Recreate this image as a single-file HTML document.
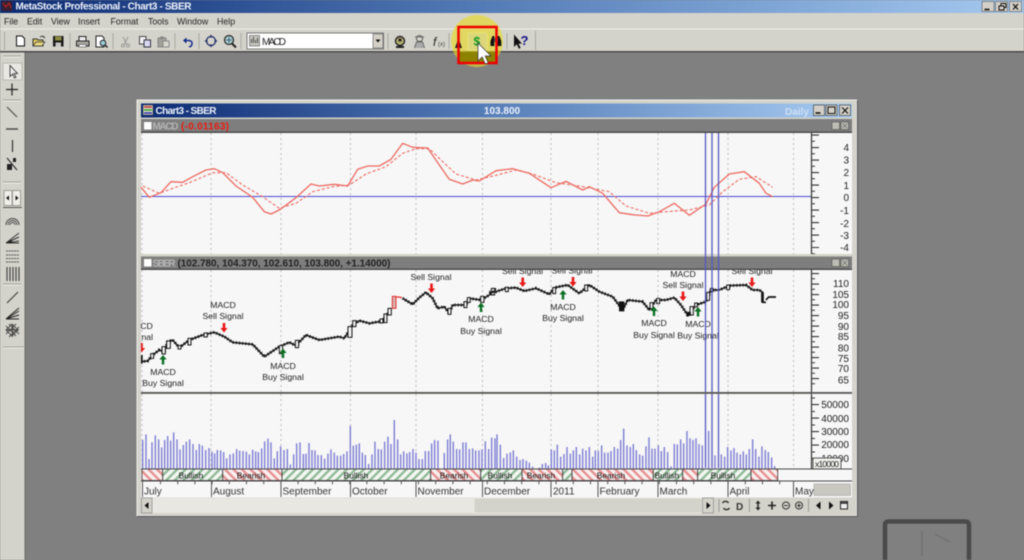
<!DOCTYPE html>
<html><head><meta charset="utf-8"><title>MetaStock Professional - Chart3 - SBER</title>
<style>
html,body{margin:0;padding:0;background:#808080;overflow:hidden;width:1024px;height:560px}
svg{display:block;filter:blur(.6px)}
text{font-family:"Liberation Sans",sans-serif}
.m{font-size:8.8px;fill:#222}
.a{font-size:10px;fill:#222;text-anchor:end}
.l{font-size:8.7px;fill:#222;text-anchor:middle}
.mo{font-size:10px;fill:#333}
.h{font-size:8.4px;fill:#111;text-anchor:middle}
.d{stroke:#bbb;stroke-width:1;stroke-dasharray:2 3;fill:none}
</style></head><body>
<svg width="1024" height="560" viewBox="0 0 1024 560" xmlns="http://www.w3.org/2000/svg">
<defs>
<linearGradient id="tg"><stop offset="0" stop-color="#0c2a72"/><stop offset=".45" stop-color="#5078b4"/><stop offset="1" stop-color="#a6caf0"/></linearGradient>
<pattern id="gr" width="6" height="6" patternUnits="userSpaceOnUse" patternTransform="rotate(45)"><rect width="6" height="6" fill="#f4f6f2"/><rect width="2.4" height="6" fill="#8fbb98"/></pattern>
<pattern id="rd" width="6" height="6" patternUnits="userSpaceOnUse" patternTransform="rotate(-45)"><rect width="6" height="6" fill="#f8f0f0"/><rect width="2.4" height="6" fill="#e89090"/></pattern>
<clipPath id="cp"><rect x="141" y="270" width="670" height="122"/></clipPath>
<path id="dn" d="M-1.3 -5V0H-3.6L0 4.5 3.6 0H1.3V-5Z" fill="#e81818"/>
<path id="up" d="M-1.2 5V0H-3.6L0 -4.5 3.6 0H1.2V5Z" fill="#0b6e22"/>
</defs>

<!-- desktop -->
<rect width="1024" height="560" fill="#808080"/>
<!-- ghost watermark -->
<g fill="none">
<rect x="885" y="521.500" width="84" height="60" rx="3" stroke="#4a4a4a" stroke-width="4.500"/>
<path d="M922 530V556M935 534l9 5 6 3" stroke="#727272" stroke-width="1.500"/>
</g>

<!-- title bar -->
<rect width="1024" height="13" fill="url(#tg)"/>
<rect x="2" y="1" width="10" height="10" fill="#3a2030"/><path d="M3 3l3 4 3-4 2 5" stroke="#d02020" fill="none"/>
<text x="15.5" y="9.5" font-size="10" font-weight="bold" fill="#eef2fa" textLength="176">MetaStock Professional - Chart3 - SBER</text>
<g fill="#d4d0c8" stroke="#555" stroke-width=".6">
<rect x="982" y="1.5" width="12" height="10"/><rect x="995.5" y="1.5" width="12" height="10"/><rect x="1009.5" y="1.5" width="12" height="10"/>
</g>
<path d="M984.5 9.5h5" stroke="#111" stroke-width="1.6"/>
<path d="M999 6h5v4h-5zM1001 6V3.5h5v4h-2" fill="none" stroke="#111"/>
<path d="M1013 4l5 5.500M1018 4l-5 5.500" stroke="#111" stroke-width="1.3"/>

<!-- menu and toolbar bg -->
<rect y="13" width="1024" height="39" fill="#d4d3cb"/>
<rect y="28.500" width="1024" height="1" fill="#f0efe9"/>
<rect y="51" width="1024" height="1.500" fill="#4a4a4a"/>
<text class="m" x="4" y="24.500">File</text>
<text class="m" x="27" y="24.500">Edit</text>
<text class="m" x="51" y="24.500">View</text>
<text class="m" x="78" y="24.500">Insert</text>
<text class="m" x="110.500" y="24.500">Format</text>
<text class="m" x="148" y="24.500">Tools</text>
<text class="m" x="177" y="24.500">Window</text>
<text class="m" x="217" y="24.500">Help</text>

<!-- toolbar separators -->
<path d="M4.500 32V50M70 33V49M113 33V49M175 33V49M199 33V49M241 33V49M388 33V49M449 33V49M507 33V49M535.500 31V50" stroke="#a9a8a0"/>

<!-- new -->
<path d="M16.500 36h5.500l2.500 2.500V46h-8Z" fill="#fff" stroke="#111"/>
<!-- open -->
<path d="M33 46V39h4l1 1h5v6Z" fill="#dcc860" stroke="#333"/><path d="M33 46l3-4h9l-3 4Z" fill="#e8d880" stroke="#333" stroke-width=".7"/><path d="M40 37q3-2 5 1" stroke="#333" fill="none"/>
<!-- save -->
<rect x="53" y="36" width="10.500" height="10.500" fill="#1a1a1a"/><rect x="55" y="36.500" width="6.500" height="4" fill="#8a8a40"/><rect x="55.500" y="42.500" width="5.500" height="4" fill="#c8c8c0"/>
<!-- print -->
<rect x="76.500" y="41" width="12.500" height="5" fill="#a8a8a0" stroke="#222"/><rect x="79" y="36.500" width="7" height="4.500" fill="#eee" stroke="#222"/><rect x="79" y="44.500" width="7" height="2.500" fill="#fff" stroke="#444" stroke-width=".6"/>
<!-- preview -->
<path d="M96 36h6l2 2v9h-8Z" fill="#fff" stroke="#222"/><circle cx="103" cy="43" r="2.800" fill="#9ad0d8" stroke="#222"/><path d="M105 45l2.500 2.500" stroke="#222" stroke-width="1.500"/>
<!-- cut -->
<path d="M123 37l3.500 7M128 37l-3.500 7" stroke="#999"/><circle cx="123" cy="45.500" r="1.500" fill="none" stroke="#999"/><circle cx="128" cy="45.500" r="1.500" fill="none" stroke="#999"/>
<!-- copy -->
<rect x="139.500" y="36.500" width="6.500" height="7.500" fill="#f4f4f4" stroke="#444"/><rect x="144" y="40" width="6.500" height="7" fill="#d8d8f0" stroke="#334"/>
<!-- paste -->
<rect x="158" y="38" width="8" height="9" fill="#a0a098" stroke="#888"/><rect x="163" y="41" width="6" height="6" fill="#d8d8d0" stroke="#888"/><rect x="160" y="36.500" width="4" height="2.500" fill="#888"/>
<!-- undo -->
<path d="M184 40.500h5q3.500 .5 3 3.500t-3 2.500" fill="none" stroke="#142a8a" stroke-width="1.500"/><path d="M186.500 37.500v6l-3.500-3Z" fill="#142a8a"/>
<!-- move -->
<circle cx="211" cy="41" r="4.500" fill="none" stroke="#24306a" stroke-width="1.300"/><path d="M211 34.500l2 3h-4ZM211 47.500l2-3h-4ZM204.500 41l3-2v4ZM217.500 41l-3-2v4Z" fill="#24306a"/>
<!-- zoom -->
<circle cx="229" cy="40" r="4.500" fill="#a8d4d0" stroke="#222" stroke-width="1.200"/><path d="M232 43.500l4 4" stroke="#222" stroke-width="2"/><path d="M226 40h6M229 37v6" stroke="#336" stroke-width=".7"/>
<!-- combo -->
<rect x="247" y="33" width="136.500" height="16" fill="#fff" stroke="#777"/>
<rect x="249.500" y="35.500" width="10" height="10.500" fill="#c4c4bc" stroke="#555" stroke-width=".6"/>
<path d="M251.500 43v-4M253.500 43v-6M255.500 43v-3M257.500 43v-5" stroke="#333" stroke-width=".8"/>
<text x="262" y="44.800" font-size="10" fill="#222" textLength="24">MACD</text>
<rect x="373" y="34" width="10" height="14" fill="#d4d0c8" stroke="#555" stroke-width=".6"/><path d="M375.500 39.500h5l-2.500 3Z" fill="#111"/>
<!-- expert icons -->
<circle cx="400" cy="41" r="4.500" fill="#b4b070" stroke="#222" stroke-width="1.400"/><path d="M396 46h8v2h-8Z" fill="#222"/><circle cx="400" cy="40" r="1.600" fill="#222"/>
<circle cx="419.500" cy="38.500" r="3" fill="#d8d8d0" stroke="#555"/><path d="M415 37h9M414.500 48l2-6h6l2 6" fill="#aaa" stroke="#666"/>
<text x="433" y="46" font-size="12" font-style="italic" font-family="Liberation Serif" fill="#222">f</text><text x="438" y="46" font-size="6" fill="#444">(x)</text>

<!-- yellow highlight -->
<circle cx="477" cy="41" r="26" fill="#e6da20" fill-opacity=".62"/>
<rect x="468" y="33" width="19" height="17" fill="#dcd67a" stroke="#eee77e" stroke-width=".7"/>
<rect x="459" y="52" width="37" height="10.500" fill="#8d8100"/>
<path d="M455 48l3.500-10 3.500 10Z" fill="#1a1a1a"/>
<text x="473.500" y="45.500" font-size="12" font-weight="bold" fill="#119a22">$</text>
<!-- binoculars -->
<path d="M490.500 46v-5l2-5h1.800v10ZM497.500 46V36h1.800l2 5v5Z" fill="#111"/><rect x="494" y="38" width="4" height="4" fill="#555"/>
<!-- help -->
<path d="M514 34.500V47l2.800-2.800 2 4.500 1.800-.8-2-4.300H522Z" fill="#111"/>
<text x="520.500" y="45" font-size="13" font-weight="bold" fill="#14148a">?</text>
<rect x="458.500" y="27" width="38" height="36" fill="none" stroke="#f00000" stroke-width="2.500"/>
<path d="M478 43V61l4.200-4 3 7 3-1.300-3-6.700H491Z" fill="#fff" stroke="#333" stroke-width=".7"/>

<!-- left toolbar -->
<rect x="0" y="52.500" width="24.500" height="508" fill="#d4d3cb"/>
<rect x="24.500" y="52.500" width="1" height="508" fill="#6a6a6a"/>
<path d="M3 56h18M3 100h18M3 182h18M3 284h18M3 347h21" stroke="#a0a098"/><path d="M3 57h18M3 101h18M3 183h18M3 285h18M3 348h21" stroke="#f0efe9"/>
<rect x="3" y="63" width="19" height="17" fill="#e8e7e2" stroke="#b8b8b0"/>
<path d="M10 65.500v11l2.500-2.500 2 4 1.500-.8-2-3.700h3.500Z" fill="#eee" stroke="#222" stroke-width=".8"/>
<path d="M6 89.500h12M12 83.500v12" stroke="#222" stroke-width="1.200"/>
<path d="M7 107l10 10" stroke="#444" stroke-width="1.100"/>
<path d="M6 129h12" stroke="#444" stroke-width="1.400"/>
<path d="M12.500 140v12" stroke="#333" stroke-width="1.200"/>
<path d="M7 158l10 12" stroke="#333" stroke-width="1.200"/><path d="M7 164h5v6H7ZM13 158h3v4h-3Z" fill="#222"/>
<rect x="4" y="190.500" width="8" height="15" fill="#f0efe9" stroke="#9a9a92"/><rect x="12.500" y="190.500" width="8" height="15" fill="#f0efe9" stroke="#9a9a92"/>
<path d="M3 207.500h19" stroke="#555"/><path d="M6 198l3-2.500v5ZM18.500 198l-3-2.500v5Z" fill="#111"/>
<path d="M6 225a6.500 6.500 0 0 1 13 0M8 225a4.500 4.500 0 0 1 9 0M10 225a2.500 2.500 0 0 1 5 0" stroke="#444" fill="none"/>
<path d="M6 243L19 233M6 243L19 237M6 243L19 241M6 243h13" stroke="#333"/><path d="M6 243L12 240v3Z" fill="#222"/>
<path d="M6 251h13M6 255h13M6 258.500h13M6 262h13" stroke="#555" stroke-dasharray="2 .7"/>
<path d="M7 267v14M10 267v14M13 267v14M16 267v14M19 267v14" stroke="#444" stroke-width="1.200"/>
<path d="M7 303l11-11" stroke="#333" stroke-width="1"/>
<path d="M6 319L19 308M6 319L19 311M6 319L19 315M6 319h13" stroke="#222" stroke-width="1"/>
<path d="M6 330l6-6 6 6-6 6ZM6 326l10 10M9 324l10 10M6 334l10-10M9 337l10-10M6 330h13M12.500 324v13" stroke="#444" stroke-width=".9" fill="none"/>

<!-- chart window -->
<rect x="137" y="100" width="720" height="416" fill="#d4d3cb"/>
<path d="M137 100h720v416H137Z" fill="none" stroke="#efeee9"/>
<rect x="141" y="103.500" width="711" height="14" fill="url(#tg)"/>
<rect x="143" y="105" width="10" height="10" fill="#d8d8c8" stroke="#333" stroke-width=".5"/><path d="M144 107h8" stroke="#c03030" stroke-width="1.500"/><path d="M144 110h8" stroke="#30a030" stroke-width="1.500"/><path d="M144 113h8" stroke="#3030b0" stroke-width="1.500"/>
<text x="155.500" y="114" font-size="10" font-weight="bold" fill="#eef2fa" textLength="61">Chart3 - SBER</text>
<text x="502" y="114" font-size="10" font-weight="bold" fill="#eef2fa" text-anchor="middle">103.800</text>
<text x="785" y="115" font-size="10" font-weight="bold" fill="#cfe0f4">Daily</text>
<g fill="#d4d0c8" stroke="#444" stroke-width=".7"><rect x="813.500" y="105" width="11" height="10.500"/><rect x="826" y="105" width="11" height="10.500"/><rect x="839.500" y="105" width="11" height="10.500"/></g>
<path d="M815.500 113h5" stroke="#111" stroke-width="1.600"/><rect x="828" y="107" width="7" height="6.500" fill="none" stroke="#111"/><path d="M842 107.500l6 6M848 107.500l-6 6" stroke="#111" stroke-width="1.200"/>

<!-- panel headers -->
<rect x="141" y="119" width="711" height="14" fill="#7e7e7e"/><rect x="141" y="131.500" width="711" height="1.500" fill="#4c4c4c"/>
<rect x="141" y="256.500" width="711" height="13.500" fill="#7e7e7e"/><rect x="141" y="268.500" width="711" height="1.500" fill="#4c4c4c"/>
<rect x="144" y="122" width="7.500" height="7.500" fill="#fff"/><rect x="144" y="259" width="7.500" height="7.500" fill="#fff"/>
<text x="152.500" y="129.500" font-size="10" fill="#b4b4b4" font-weight="bold" textLength="26">MACD</text>
<text x="181" y="129.500" font-size="10" font-weight="bold" fill="#e81c10" textLength="48">(-0.01163)</text>
<text x="152.500" y="266.500" font-size="10" fill="#b4b4b4" font-weight="bold" textLength="23">SBER</text>
<text x="177.500" y="266.500" font-size="10" font-weight="bold" fill="#222" textLength="213">(102.780, 104.370, 102.610, 103.800, +1.14000)</text>
<g fill="#bdbdb5" stroke="#444" stroke-width=".5"><rect x="832" y="122" width="7.500" height="7.500"/><rect x="841" y="122" width="7.500" height="7.500"/></g>
<path d="M842.500 123.500l4.500 4.500M847 123.500l-4.500 4.500" stroke="#666" stroke-width=".7"/>

<!-- panels -->
<rect x="141" y="133" width="711" height="121" fill="#f7f7f7"/>
<rect x="141" y="270" width="711" height="122" fill="#f7f7f7"/>
<rect x="141" y="394" width="711" height="75" fill="#f7f7f7"/>
<rect x="141" y="392" width="711" height="1.800" fill="#555"/>
<rect x="141" y="254" width="711" height="2.500" fill="#d4d3cb"/>

<!-- grid -->
<g class="d">
<path d="M142 133V254M142 270V392M142 394V469"/>
<path d="M211 133V254M211 270V392M211 394V469"/>
<path d="M281 133V254M281 270V392M281 394V469"/>
<path d="M350.500 133V254M350.500 270V392M350.500 394V469"/>
<path d="M416 133V254M416 270V392M416 394V469"/>
<path d="M482.500 133V254M482.500 270V392M482.500 394V469"/>
<path d="M551 133V254M551 270V392M551 394V469"/>
<path d="M598 133V254M598 270V392M598 394V469"/>
<path d="M658 133V254M658 270V392M658 394V469"/>
<path d="M728 133V254M728 270V392M728 394V469"/>
<path d="M793.500 133V254M793.500 270V392M793.500 394V469"/>
</g>

<!-- MACD -->
<path d="M141 196.500H811" stroke="#4a4ad0" stroke-width="1.100"/>
<g fill="none" stroke="#ec6a62" stroke-linejoin="round">
<path stroke-width="1.300" d="M141 187.300L149.300 197.300 161 192.700 171 181.700 182.700 182.300 192.700 176.700 206 170 214.300 168.700 222.700 172.700 236 186 252.700 197.300 264.300 211.700 271 214 279.300 210 296 197.700 311 184 319.300 186 334.300 184.300 347.700 186 357.700 169.300 367.700 166 379.300 166 391 159.300 402.700 143.300 412.700 147.300 427.700 148 439.300 165 449.300 179.300 462.700 184 472.700 180 479.300 181 496 170.700 512.700 168.700 529.300 173.300 551 187.700 566 181.300 582.700 190 589.300 186.700 602.700 193.300 619.300 212.700 632.700 214.700 647.700 216 659.300 211.700 674.300 203.300 689.300 215.300 706 204 714.300 187.300 729.300 174 744.300 171.700 759.300 183.300 766 193.300 772.700 196.700"/>
<path stroke-width="1.100" stroke-dasharray="3 2" d="M142.700 186L159.300 193.300 172.700 188.300 189.300 182.700 212.700 172.700 226 172.700 242.700 185 262.700 196.700 279.300 208.300 296 203.300 312.700 191.700 332.700 186.700 349.300 185 366 174 386 166.700 402.700 153.300 416 148.700 429.300 148.700 442.700 161.700 456 174 476 180 496 175.300 516 170 532.700 174 556 182.700 579.300 186 609.300 191.700 626 206 649.300 213.300 666 211.700 689.300 210 709.300 205 722.700 191.700 739.300 179.300 756 176.700 772.700 187.300"/>
</g>

<!-- volume bars -->
<g fill="none" stroke="#7c7cd4" stroke-width="4.200">
<path transform="matrix(.3333 0 0 .3333 136 390)" d="M20 237V150M30 237V133M39 237V207M48 237V157M58 237V136M68 237V148M77 237V172M86 237V150M95 237V138M104 237V152M113 237V127M123 237V148M132 237V178M142 237V165M151 237V155M161 237V148M171 237V162M181 237V180M190 237V162M199 237V167M209 237V180M219 237V174M228 237V185M236 237V190M244 237V180M254 237V181M263 237V186M272 237V205M282 237V193M292 237V190M302 237V177M311 237V182M321 237V183M331 237V185M340 237V193M350 237V179M359 237V184M367 237V186M377 237V175M386 237V154M396 237V146M405 237V157M415 237V205M424 237V184M434 237V169M444 237V180M454 237V177M463 237V223M473 237V193M482 237V160M492 237V157M502 237V192M510 237V191M519 237V159M528 237V180M537 237V181M546 237V195M556 237V195M566 237V206M576 237V191M585 237V178M595 237V188M604 237V197M614 237V197M623 237V192M633 237V184M643 237V108M652 237V167M661 237V164M670 237V160M679 237V188M688 237V195M698 237V222M708 237V193M717 237V155M727 237V177M736 237V178M746 237V155M756 237V140M765 237V162M775 237V90M785 237V148M794 237V193M803 237V184M813 237V190M821 237V186M831 237V177M840 237V188M849 237V207M859 237V207M868 237V183M878 237V183M887 237V160M896 237V150M906 237V152M925 237V189M935 237V148M943 237V133M952 237V155M962 237V177M971 237V178M981 237V157M990 237V157M1000 237V177M1010 237V175M1019 237V181M1029 237V181M1038 237V178M1048 237V154M1058 237V177M1067 237V143M1077 237V145"/>
<path transform="matrix(.3333 0 0 .3333 496 390)" d="M3 237V133M13 237V164M23 237V204M33 237V191M43 237V187M52 237V181M62 237V200M72 237V210M81 237V207M91 237V212M100 237V218M110 237V230M120 237V236M130 237V233M139 237V222M149 237V219M157 237V226M166 237V178M175 237V181M184 237V164M194 237V200M204 237V192M213 237V171M223 237V191M232 237V181M241 237V171M251 237V193M260 237V176M270 237V181M280 237V171M290 237V200M298 237V181M307 237V183M317 237V166M326 237V188M336 237V188M345 237V183M355 237V171M365 237V176M374 237V150M383 237V116M393 237V166M403 237V171M412 237V162M421 237V180M431 237V193M440 237V197M450 237V169M459 237V142M468 237V176M477 237V176M487 237V166M496 237V183M505 237V171M515 237V186M525 237V229M535 237V162M544 237V163M554 237V148M563 237V160M573 237V123M582 237V145M591 237V150M600 237V145M609 237V162M619 237V166M638 237V123M657 237V196M676 237V193M686 237V200M695 237V171M705 237V181M714 237V174M723 237V188M733 237V193M742 237V184M751 237V193M760 237V177M770 237V148M779 237V177M789 237V200M798 237V169M808 237V180M817 237V186M827 237V202M836 237V228"/>
</g>

<!-- price line -->
<g clip-path="url(#cp)">
<g transform="matrix(.3333 0 0 .3333 136 255)" fill="none" stroke="#111" stroke-linejoin="round">
<path stroke-width="4.500" d="M15 320L35 318 50 300 70 285 85 290 95 260 110 255 130 278 160 255 200 240 235 232 265 245 290 262 350 268 385 305 430 275 460 262 480 272 510 240 550 255 610 245 625 250 650 210 670 197 700 205 740 198 760 170M800 130L830 148 850 128 870 112 890 130 905 160 925 155 940 175 950 150 990 150 1000 130 1035 135 1060 120 1080 100"/>
<path stroke-width="10" stroke-dasharray="2.500 7" d="M15 320L35 318 50 300 70 285 85 290 95 260 110 255 130 278 160 255 200 240 235 232 265 245 290 262 350 268 385 305 430 275 460 262 480 272 510 240 550 255 610 245 625 250 650 210 670 197 700 205 740 198 760 170M800 130L830 148 850 128 870 112 890 130 905 160 925 155 940 175 950 150 990 150 1000 130 1035 135 1060 120 1080 100"/>
<g fill="#f2f2f2" stroke-width="3">
<rect x="44" y="296" width="9" height="14"/><rect x="78" y="275" width="10" height="22"/><rect x="92" y="258" width="11" height="22"/><rect x="126" y="272" width="9" height="10"/><rect x="156" y="250" width="9" height="20"/><rect x="204" y="234" width="10" height="12"/><rect x="430" y="272" width="10" height="24"/><rect x="478" y="256" width="10" height="22"/><rect x="636" y="215" width="12" height="32"/><rect x="650" y="197" width="10" height="18"/><rect x="732" y="192" width="9" height="12"/><rect x="744" y="177" width="9" height="26"/><rect x="756" y="160" width="10" height="20"/><rect x="936" y="160" width="9" height="18"/><rect x="984" y="140" width="9" height="18"/><rect x="994" y="128" width="9" height="14"/><rect x="1034" y="124" width="10" height="18"/><rect x="1066" y="100" width="10" height="20"/>
</g>
<rect x="769" y="124" width="11" height="36" fill="#dcb4b4" stroke="#e03030" stroke-width="3"/>
<path d="M778 126h10l10 2" stroke="#e83030" stroke-width="4"/>
<path d="M16 300V326" stroke-width="8"/>
</g>
<g transform="matrix(.3333 0 0 .3333 496 255)" fill="none" stroke="#111" stroke-linejoin="round">
<path stroke-width="4.500" d="M-20 112L0 110 30 100 60 98 85 108 120 100 160 118 175 98 215 90 250 115 280 90 310 110 350 125 380 165 395 135 440 140 460 165 480 135 510 135 535 128 555 150 575 180 600 150 630 140 645 105 670 105 700 92 750 90 770 105 790 105 800 112"/>
<path stroke-width="10" stroke-dasharray="2.500 7" d="M-20 112L0 110 30 100 60 98 85 108 120 100 160 118 175 98 215 90 250 115 280 90 310 110 350 125 380 165 395 135 440 140 460 165 480 135 510 135 535 128 555 150 575 180 600 150 630 140 645 105 670 105 700 92 750 90 770 105 790 105 800 112"/>
<path d="M800 112V142h10M810 135L818 126H840" stroke-width="5"/>
<g fill="#f2f2f2" stroke-width="3">
<rect x="28" y="97" width="9" height="13"/><rect x="170" y="98" width="9" height="18"/><rect x="266" y="90" width="9" height="18"/><rect x="462" y="143" width="9" height="18"/><rect x="482" y="130" width="9" height="16"/><rect x="582" y="155" width="10" height="25"/><rect x="596" y="144" width="8" height="12"/><rect x="632" y="112" width="9" height="24"/><rect x="643" y="100" width="9" height="10"/><rect x="692" y="90" width="9" height="14"/></g>
<rect x="370" y="140" width="14" height="28" fill="#111" stroke-width="2"/>
<rect x="572" y="172" width="12" height="10" fill="#111" stroke-width="1"/>
<rect x="796" y="112" width="7" height="30" fill="#111" stroke-width="1"/>
</g>
<!-- arrows -->
<use href="#dn" x="141.500" y="348"/><use href="#dn" x="224" y="328"/><use href="#dn" x="431.500" y="288.500"/><use href="#dn" x="522.700" y="282.500"/><use href="#dn" x="573" y="282"/><use href="#dn" x="683" y="296.500"/><use href="#dn" x="752" y="282.500"/>
<use href="#up" x="163" y="359.500"/><use href="#up" x="283" y="353"/><use href="#up" x="481" y="307"/><use href="#up" x="563" y="294.500"/><use href="#up" x="654" y="311"/><use href="#up" x="698" y="311.500"/>
<!-- labels -->
<text class="l" x="140" y="329">MACD</text><text class="l" x="141" y="340">Signal</text>
<text class="l" x="223" y="308">MACD</text><text class="l" x="223" y="319">Sell Signal</text>
<text class="l" x="431" y="280">Sell Signal</text>
<text class="l" x="163" y="375">MACD</text><text class="l" x="163" y="386">Buy Signal</text>
<text class="l" x="283" y="369">MACD</text><text class="l" x="283" y="380">Buy Signal</text>
<text class="l" x="481" y="322">MACD</text><text class="l" x="481" y="334">Buy Signal</text>
<text class="l" x="522.500" y="274">Sell Signal</text><text class="l" x="572" y="273.500">Sell Signal</text>
<text class="l" x="563" y="310">MACD</text><text class="l" x="563" y="321">Buy Signal</text>
<text class="l" x="683" y="277">MACD</text><text class="l" x="683" y="288">Sell Signal</text>
<text class="l" x="654" y="326">MACD</text><text class="l" x="654" y="338">Buy Signal</text>
<text class="l" x="698" y="327">MACD</text><text class="l" x="698" y="338.500">Buy Signal</text>
<text class="l" x="752" y="274">Sell Signal</text>
</g>

<!-- vertical lines -->
<path d="M705.500 133V392M712 133V392M718.500 133V392M705.500 394V468M712 394V468M718.500 394V468" stroke="#5656c4" stroke-width="1.300"/>

<!-- right axes -->
<rect x="812" y="133" width="40" height="336" fill="#f7f7f7"/>
<rect x="812" y="254" width="40" height="2.500" fill="#d4d3cb"/><rect x="812" y="256.500" width="40" height="13.500" fill="#7e7e7e"/><rect x="812" y="268.500" width="40" height="1.500" fill="#4c4c4c"/><rect x="812" y="392" width="40" height="1.800" fill="#555"/>
<g fill="#bdbdb5" stroke="#444" stroke-width=".5"><rect x="832" y="259" width="7.500" height="7.500"/><rect x="841" y="259" width="7.500" height="7.500"/></g>
<path d="M842.500 260.500l4.500 4.500M847 260.500l-4.500 4.500" stroke="#666" stroke-width=".7"/>
<path d="M811.500 133V254M811.500 270V392M811.500 394V469" stroke="#333" stroke-width="1.200"/>
<g fill="none" stroke="#333">
<path d="M815 134.500V248" stroke-width="8" stroke-dasharray="1.100 11.400"/>
<path d="M813 140.700V254" stroke-width="4" stroke-dasharray="1 11.500"/>
<path d="M815 273V380" stroke-width="8" stroke-dasharray="1.100 9.400"/>
<path d="M813 278.200V390" stroke-width="4" stroke-dasharray="1 9.500"/>
<path d="M815 404V459" stroke-width="8" stroke-dasharray="1.100 12.400"/>
<path d="M813 397.500V459" stroke-width="4" stroke-dasharray="1 12.500"/>
</g>
<text class="a" x="849" y="151">4</text><text class="a" x="849" y="163.500">3</text><text class="a" x="849" y="176">2</text><text class="a" x="849" y="189">1</text><text class="a" x="849" y="201">0</text><text class="a" x="849" y="214">-1</text><text class="a" x="849" y="227">-2</text><text class="a" x="849" y="239">-3</text><text class="a" x="849" y="251">-4</text>
<text class="a" x="849" y="287">110</text><text class="a" x="849" y="298">105</text><text class="a" x="849" y="308">100</text><text class="a" x="849" y="319">95</text><text class="a" x="849" y="330">90</text><text class="a" x="849" y="340">85</text><text class="a" x="849" y="351.500">80</text><text class="a" x="849" y="362">75</text><text class="a" x="849" y="372">70</text><text class="a" x="849" y="383.500">65</text>
<text class="a" x="849" y="408">50000</text><text class="a" x="849" y="422">40000</text><text class="a" x="849" y="435">30000</text><text class="a" x="849" y="448">20000</text><text class="a" x="849" y="462">10000</text>
<rect x="813" y="458" width="28" height="11" fill="#f0f0ec" stroke="#333" stroke-width=".8"/>
<text x="815" y="467" font-size="8.500" fill="#222" textLength="24">x10000</text>

<!-- bull bear strip -->
<rect x="141" y="469" width="711" height="12" fill="#f7f7f7"/>
<g stroke="#333" stroke-width=".8">
<rect x="142" y="469" width="20.700" height="11.500" fill="url(#rd)"/>
<rect x="162.700" y="469" width="60" height="11.500" fill="url(#gr)"/>
<rect x="222.700" y="469" width="59.300" height="11.500" fill="url(#rd)"/>
<rect x="282" y="469" width="148.700" height="11.500" fill="url(#gr)"/>
<rect x="430.700" y="469" width="50" height="11.500" fill="url(#rd)"/>
<rect x="480.700" y="469" width="41.300" height="11.500" fill="url(#gr)"/>
<rect x="522" y="469" width="40.700" height="11.500" fill="url(#rd)"/>
<rect x="562.700" y="469" width="9.300" height="11.500" fill="url(#gr)"/>
<rect x="572" y="469" width="81.300" height="11.500" fill="url(#rd)"/>
<rect x="653.300" y="469" width="29.400" height="11.500" fill="url(#gr)"/>
<rect x="682.700" y="469" width="15" height="11.500" fill="url(#rd)"/>
<rect x="697.700" y="469" width="53.300" height="11.500" fill="url(#gr)"/>
<rect x="751" y="469" width="26.700" height="11.500" fill="url(#rd)"/>
</g>
<path d="M141 469H852M141 481H852" stroke="#444" stroke-width="1.100"/>
<text class="h" x="191" y="478.500">Bullish</text><text class="h" x="251" y="478.500">Bearish</text><text class="h" x="356" y="478.500">Bullish</text><text class="h" x="454" y="478.500">Bearish</text><text class="h" x="500" y="478.500">Bullish</text><text class="h" x="541" y="478.500">Bearish</text><text class="h" x="611" y="478.500">Bearish</text><text class="h" x="667" y="478.500">Bullish</text><text class="h" x="723" y="478.500">Bullish</text>

<!-- months -->
<rect x="141" y="481.500" width="711" height="16" fill="#f7f7f7"/>
<path d="M142.500 481V497M211.500 481V497M281 481V497M350.500 481V497M416 481V497M482.500 481V497M551 481V497M598 481V497M658 481V497M728 481V497M793.500 481V497" stroke="#555" stroke-width="1"/>
<path d="M160 481H795" stroke="#555" stroke-width="3.500" stroke-dasharray="1 16.200" transform="translate(0 1.500)"/>
<text class="mo" x="144" y="494.500">July</text><text class="mo" x="213" y="494.500">August</text><text class="mo" x="282.500" y="494.500">September</text><text class="mo" x="352" y="494.500">October</text><text class="mo" x="417.500" y="494.500">November</text><text class="mo" x="484" y="494.500">December</text><text class="mo" x="553" y="494.500">2011</text><text class="mo" x="599.500" y="494.500">February</text><text class="mo" x="659.500" y="494.500">March</text><text class="mo" x="729.500" y="494.500">April</text><text class="mo" x="795" y="494.500">May</text>
<rect x="814" y="484" width="36.500" height="11.500" fill="#c9c8c0" stroke="#aaa" stroke-width=".7"/>

<!-- scrollbar -->
<rect x="141" y="497.500" width="711" height="16" fill="#d4d3cb"/>
<rect x="152" y="498" width="322" height="15" fill="#e8e7e2"/>
<rect x="474" y="498" width="228" height="15" fill="#d4d3cb" stroke="#efeee9" stroke-width=".7"/>
<rect x="141.500" y="498" width="10.500" height="15" fill="#d4d3cb" stroke="#888" stroke-width=".7"/>
<path d="M148.500 502v7l-4-3.500Z" fill="#111"/>
<rect x="702.500" y="498" width="11" height="15" fill="#d4d3cb" stroke="#888" stroke-width=".7"/>
<path d="M706.500 502v7l4-3.500Z" fill="#111"/>
<path d="M719 499V512M749.500 499V512M808.500 499V512" stroke="#999"/>
<path d="M722.500 503a3.500 3.500 0 0 1 6 0M729.500 508a3.500 3.500 0 0 1-6 0" fill="none" stroke="#333" stroke-width="1.400"/>
<text x="736" y="510" font-size="10" font-weight="bold" fill="#333">D</text>
<path d="M758 500.500l2.500 3h-5ZM758 510.500l2.500-3h-5Z" fill="#222"/><path d="M758 503v5" stroke="#222" stroke-width="1.500"/>
<path d="M772 501.500v8M768 505.500h8" stroke="#222" stroke-width="1.600"/>
<circle cx="786" cy="505.500" r="3.500" fill="none" stroke="#333"/><path d="M784 505.500h4" stroke="#333"/>
<circle cx="799" cy="505.500" r="3.500" fill="none" stroke="#333"/><path d="M797 505.500h4M799 503.500v4" stroke="#333"/>
<path d="M820.500 501.500v8l-4.500-4ZM829 501.500v8l4.500-4Z" fill="#111"/>
<rect x="840.500" y="501.500" width="7" height="7.500" fill="#eee" stroke="#222"/><path d="M840.500 503h7" stroke="#222" stroke-width="1.500"/>
<rect x="857" y="100" width="1" height="416" fill="#555"/><rect x="137" y="516" width="721" height="1" fill="#555"/>
</svg>
</body></html>
